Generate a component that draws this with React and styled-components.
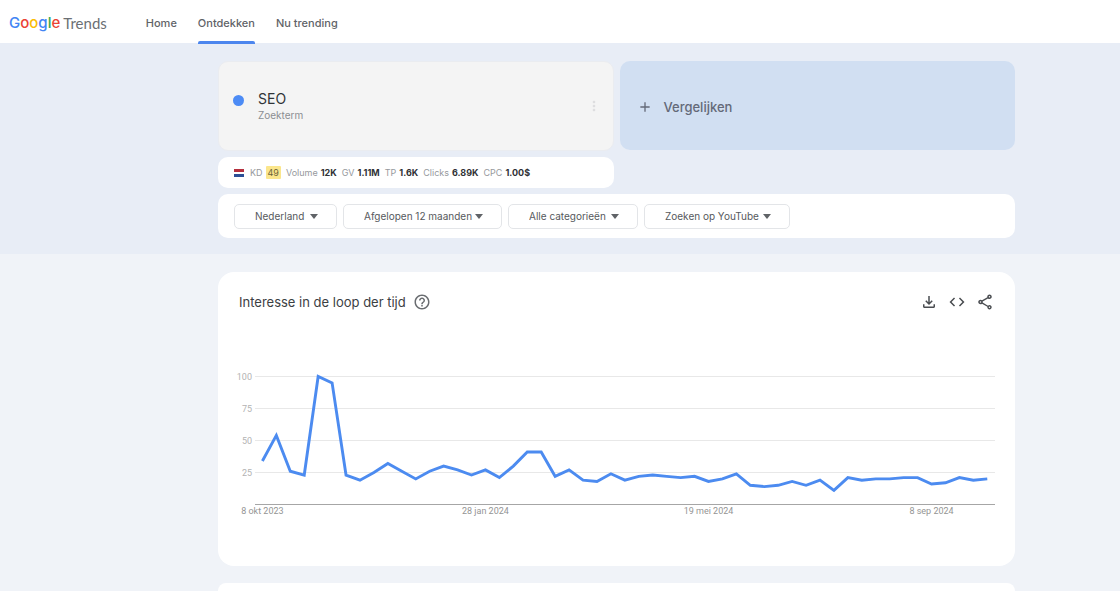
import React from "react";
import styled, { createGlobalStyle } from "styled-components";
import {
  MdAdd,
  MdCode,
  MdHelpOutline,
  MdMoreVert,
  MdOutlineFileDownload,
  MdOutlineShare,
} from "react-icons/md";

const GlobalStyle = createGlobalStyle`
  *, *::before, *::after { box-sizing: border-box; }
  body {
    margin: 0;
    background: #f0f3f8;
    color: #3c4043;
    font-family: Inter, "Liberation Sans", sans-serif;
  }
  button, select { font-family: inherit; }
  h1, h2, p, dl, dd { margin: 0; }
`;

const Page = styled.div`
  display: flex;
  flex-direction: column;
  min-height: 100vh;
`;

const Header = styled.header`
  display: flex;
  align-items: stretch;
  gap: 39px;
  height: 43px;
  padding-left: 9px;
  background: #fff;
`;

const Logo = styled.a`
  display: flex;
  align-items: center;
  gap: 3px;
  padding-top: 3px;
  color: #6b6f74;
  font-family: Lato, "Liberation Sans", sans-serif;
  font-size: 15px;
  line-height: 20px;
  text-decoration: none;
`;

const Google = styled.span`
  font-family: Inter, sans-serif;
  font-weight: 500;
`;

const Letter = styled.span`
  color: ${(p) => p.$color};
`;

const Nav = styled.nav`
  display: flex;
  gap: 21px;
`;

const NavLink = styled.a`
  position: relative;
  display: flex;
  align-items: center;
  padding-top: 3px;
  color: #5f6368;
  font-size: 11px;
  font-weight: 500;
  text-decoration: none;

  &[aria-current]::after {
    content: "";
    position: absolute;
    right: 0;
    bottom: -1px;
    left: 0;
    height: 3px;
    border-radius: 2px 2px 0 0;
    background: #4c86ee;
  }
`;

const Hero = styled.section`
  display: flex;
  flex-direction: column;
  gap: 6px;
  padding: 18px 105px 16px 218px;
  background: #e8edf6;
`;

const Terms = styled.div`
  display: grid;
  grid-template-columns: 1fr 1fr;
  gap: 6px;
`;

const TermCard = styled.div`
  display: flex;
  align-items: center;
  gap: 14px;
  height: 90px;
  padding: 0 11px 0 14px;
  border: 1px solid #eaecf0;
  border-radius: 10px;
  background: #f4f4f4;
`;

const Dot = styled.span`
  width: 11px;
  height: 11px;
  margin-bottom: 12px;
  border-radius: 50%;
  background: #4c8bf5;
`;

const TermText = styled.div`
  flex: 1;
`;

const TermName = styled.h1`
  color: #303438;
  font-size: 14px;
  font-weight: 400;
  line-height: 18px;
`;

const TermKind = styled.p`
  color: #8b8e92;
  font-size: 10px;
  line-height: 14px;
`;

const IconButton = styled.button`
  display: flex;
  padding: 0;
  border: 0;
  background: none;
  color: ${(p) => p.$color || "#4a4d51"};
  cursor: pointer;
`;

const CompareButton = styled.button`
  display: flex;
  align-items: center;
  gap: 11px;
  height: 89px;
  padding: 3px 17px 0;
  border: 0;
  border-radius: 10px;
  background: #d1dff2;
  color: #646978;
  font-size: 13px;
  font-weight: 500;
  cursor: pointer;
`;

const Stats = styled.div`
  display: flex;
  align-items: center;
  gap: 6px;
  width: calc(50% - 3px);
  height: 31px;
  padding: 0 16px;
  border-radius: 10px;
  background: #fff;
`;

const StatList = styled.dl`
  display: flex;
  align-items: center;
  gap: 5px;
  font-size: 9px;
  line-height: 13px;
  white-space: nowrap;
`;

const Stat = styled.div`
  display: flex;
  gap: 3px;
`;

const StatName = styled.dt`
  color: #96999d;
`;

const StatValue = styled.dd`
  padding: ${(p) => (p.$badge ? "0 2px" : "0")};
  border-radius: 1px;
  background: ${(p) => (p.$badge ? "#fbe68c" : "none")};
  color: ${(p) => (p.$badge ? "#6e6538" : "#303236")};
  font-weight: ${(p) => (p.$badge ? 400 : 700)};
`;

const Filters = styled.div`
  display: flex;
  align-items: center;
  gap: 6px;
  height: 44px;
  padding: 0 16px;
  border-radius: 10px;
  background: #fff;
`;

const SelectBox = styled.div`
  position: relative;
  width: ${(p) => p.$width}px;

  &::after {
    content: "";
    position: absolute;
    top: 10px;
    right: 19px;
    border: 4px solid transparent;
    border-top: 5px solid #606367;
    border-bottom: 0;
    pointer-events: none;
  }
`;

const Select = styled.select`
  width: 100%;
  height: 25px;
  padding: 0 20px;
  border: 1px solid #e3e5e8;
  border-radius: 5px;
  appearance: none;
  background: #fff;
  color: #56595d;
  font-size: 10px;
`;

const Main = styled.main`
  display: flex;
  flex: 1;
  flex-direction: column;
  gap: 17px;
  padding: 18px 105px 0 218px;
`;

const ChartCard = styled.section`
  padding: 20px 20px 48px 16px;
  border-radius: 16px;
  background: #fff;
`;

const NextCard = styled.section`
  flex: 1;
  min-height: 8px;
  border-radius: 16px 16px 0 0;
  background: #fff;
`;

const CardHeader = styled.div`
  display: flex;
  align-items: center;
  gap: 7px;
  padding: 0 1px 0 5px;
`;

const CardTitle = styled.h2`
  color: #3c4043;
  font-size: 13px;
  font-weight: 400;
  line-height: 20px;
`;

const Actions = styled.div`
  display: flex;
  gap: 10px;
  margin-left: auto;
`;

const Chart = styled.svg`
  display: block;
  width: 100%;
  margin-top: 54px;
  font-family: Roboto, sans-serif;
  font-size: 9px;
`;

const AxisValue = styled.text`
  fill: #b3b3b3;
  text-anchor: end;
`;

const AxisDate = styled.text`
  fill: #949494;
  text-anchor: middle;
`;

const LETTERS = [
  ["G", "#4285f4"],
  ["o", "#ea4335"],
  ["o", "#fbbc05"],
  ["g", "#4285f4"],
  ["l", "#34a853"],
  ["e", "#ea4335"],
];

const STATS = [
  ["KD", "49"],
  ["Volume", "12K"],
  ["GV", "1.11M"],
  ["TP", "1.6K"],
  ["Clicks", "6.89K"],
  ["CPC", "1.00$"],
];

const FILTERS = [
  ["Locatie", "Nederland", 103],
  ["Periode", "Afgelopen 12 maanden", 159],
  ["Categorie", "Alle categorieën", 130],
  ["Zoektype", "Zoeken op YouTube", 146],
];

const VALUES = [
  34, 54, 26, 23, 100, 95, 23, 19, 25, 32, 26, 20, 26, 30, 27, 23, 27, 21, 30,
  41, 41, 22, 27, 19, 18, 24, 19, 22, 23, 22, 21, 22, 18, 20, 24, 15, 14, 15,
  18, 15, 19, 11, 21, 19, 20, 20, 21, 21, 16, 17, 21, 19, 20,
];

const DATES = [
  [0, "8 okt 2023"],
  [16, "28 jan 2024"],
  [32, "19 mei 2024"],
  [48, "8 sep 2024"],
];

const xAt = (week) => 28.4 + week * 13.94;
const yAt = (value) => 138.5 - value * 1.28;

function InterestChart() {
  const points = VALUES.map((v, i) => `${xAt(i)},${yAt(v)}`).join(" ");
  return (
    <Chart viewBox="0 0 761 152" role="img" aria-label="Interesse in de loop der tijd">
      {[25, 50, 75, 100].map((v) => (
        <g key={v}>
          <line x1="21" x2="761" y1={yAt(v)} y2={yAt(v)} stroke="#e8e8e8" />
          <AxisValue x="18" y={yAt(v) + 3}>
            {v}
          </AxisValue>
        </g>
      ))}
      <line x1="21" x2="761" y1="138.5" y2="138.5" stroke="#a6a6a6" />
      {DATES.map(([week, label]) => (
        <AxisDate key={label} x={xAt(week)} y="148">
          {label}
        </AxisDate>
      ))}
      <polyline points={points} fill="none" stroke="#4c8bf0" strokeWidth="2.9" />
    </Chart>
  );
}

function DutchFlag() {
  return (
    <svg width="10" height="8" viewBox="0 0 10 8" role="img" aria-label="Nederland">
      <rect width="10" height="8" fill="#fff" />
      <rect width="10" height="3" fill="#b5303e" />
      <rect y="5" width="10" height="3" fill="#2c4f96" />
    </svg>
  );
}

export default function App() {
  return (
    <Page>
      <GlobalStyle />
      <Header>
        <Logo href="#">
          <Google>
            {LETTERS.map(([char, color], i) => (
              <Letter key={i} $color={color}>
                {char}
              </Letter>
            ))}
          </Google>
          <span>Trends</span>
        </Logo>
        <Nav>
          <NavLink href="#home">Home</NavLink>
          <NavLink href="#explore" aria-current="page">
            Ontdekken
          </NavLink>
          <NavLink href="#trending">Nu trending</NavLink>
        </Nav>
      </Header>
      <Hero>
        <Terms>
          <TermCard>
            <Dot />
            <TermText>
              <TermName>SEO</TermName>
              <TermKind>Zoekterm</TermKind>
            </TermText>
            <IconButton aria-label="Meer opties" $color="#dddddf">
              <MdMoreVert size={16} />
            </IconButton>
          </TermCard>
          <CompareButton>
            <MdAdd size={16} />
            Vergelijken
          </CompareButton>
        </Terms>
        <Stats>
          <DutchFlag />
          <StatList>
            {STATS.map(([name, value]) => (
              <Stat key={name}>
                <StatName>{name}</StatName>
                <StatValue $badge={name === "KD"}>{value}</StatValue>
              </Stat>
            ))}
          </StatList>
        </Stats>
        <Filters>
          {FILTERS.map(([name, value, width]) => (
            <SelectBox key={name} $width={width}>
              <Select aria-label={name}>
                <option>{value}</option>
              </Select>
            </SelectBox>
          ))}
        </Filters>
      </Hero>
      <Main>
        <ChartCard>
          <CardHeader>
            <CardTitle>Interesse in de loop der tijd</CardTitle>
            <IconButton aria-label="Help" $color="#6a6d71">
              <MdHelpOutline size={18} />
            </IconButton>
            <Actions>
              <IconButton aria-label="Downloaden">
                <MdOutlineFileDownload size={18} />
              </IconButton>
              <IconButton aria-label="Insluiten">
                <MdCode size={18} />
              </IconButton>
              <IconButton aria-label="Delen">
                <MdOutlineShare size={18} />
              </IconButton>
            </Actions>
          </CardHeader>
          <InterestChart />
        </ChartCard>
        <NextCard />
      </Main>
    </Page>
  );
}
